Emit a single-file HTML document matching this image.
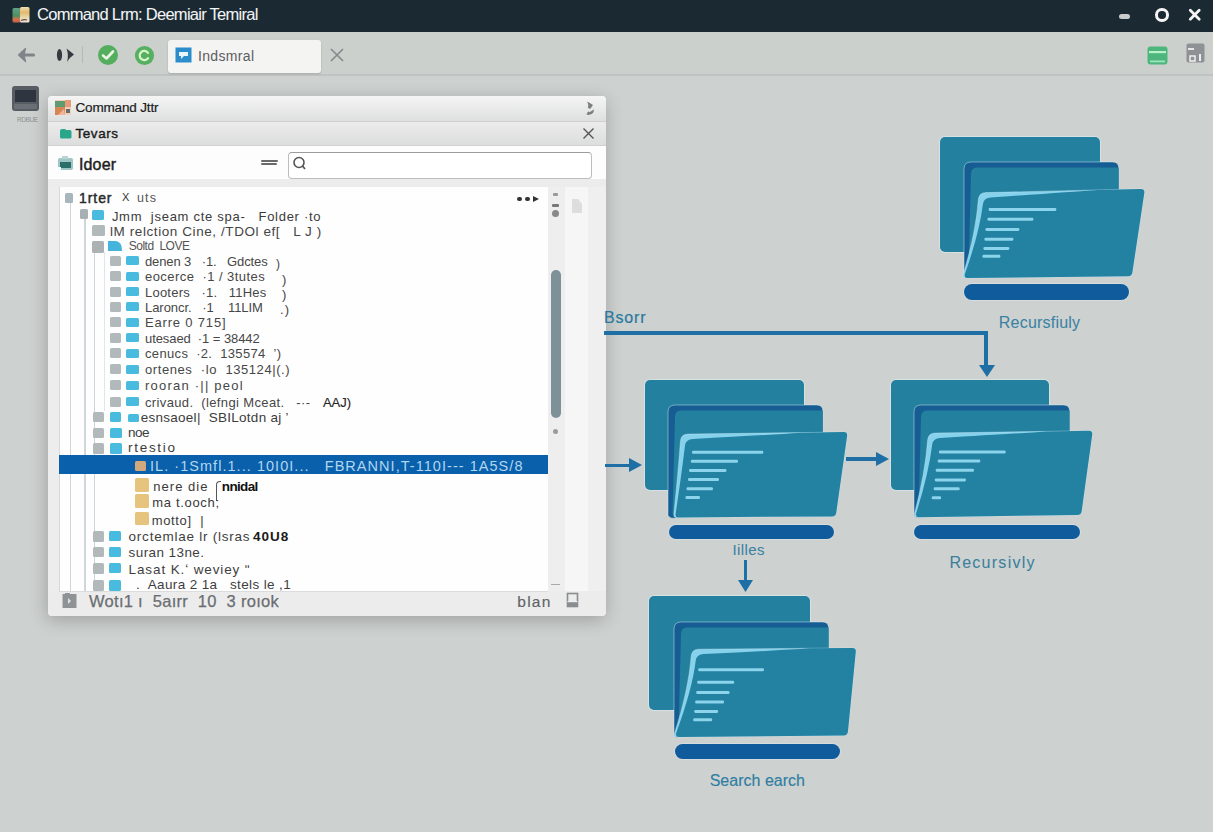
<!DOCTYPE html><html><head><meta charset="utf-8"><style>
html,body{margin:0;padding:0;}
body{width:1213px;height:832px;overflow:hidden;position:relative;background:#cdd1cf;font-family:"Liberation Sans",sans-serif;}
</style></head><body>
<div style="position:absolute;left:0px;top:0px;width:1213px;height:32px;background:#1b2933;"></div>
<svg style="position:absolute;left:12px;top:7px" width="18" height="16" viewBox="0 0 18 16"><defs>
<linearGradient id="ig1" x1="0" y1="0" x2="0" y2="1"><stop offset="0" stop-color="#5fa088"/><stop offset="0.55" stop-color="#4f8f5f"/><stop offset="0.75" stop-color="#c9784e"/><stop offset="1" stop-color="#d05a4a"/></linearGradient>
<linearGradient id="ig2" x1="0" y1="0" x2="0" y2="1"><stop offset="0" stop-color="#efe0b0"/><stop offset="0.35" stop-color="#e3b86c"/><stop offset="0.7" stop-color="#e6dcb0"/><stop offset="1" stop-color="#f0e4dc"/></linearGradient></defs>
<rect x="0.5" y="1" width="8" height="14.5" rx="1.5" fill="url(#ig1)"/><rect x="8" y="0" width="9.5" height="15.5" rx="1.5" fill="url(#ig2)"/><path d="M9 13.5Q12 12 15 13" stroke="#6a4a40" stroke-width="1.2" fill="none"/></svg>
<div style="position:absolute;left:37.0px;top:6.4px;font:normal 16.5px/16.5px 'Liberation Sans',sans-serif;color:#f2f4f5;letter-spacing:-0.73px;white-space:pre;-webkit-text-stroke:0.05px #f2f4f5;">Command Lrm: Deemiair Temiral</div>
<div style="position:absolute;left:1119px;top:13.5px;width:11px;height:5.5px;background:#c9cbcd;border-radius:3px;"></div>
<div style="position:absolute;left:1155px;top:8px;width:7.5px;height:7.5px;border:3px solid #f5f5f5;border-radius:50%;"></div>
<svg style="position:absolute;left:1187px;top:7px" width="15" height="15" viewBox="0 0 15 15"><path d="M3.3 3.3L12.2 12.2M12.2 3.3L3.3 12.2" stroke="#f5f5f5" stroke-width="2.8" stroke-linecap="round"/></svg>
<div style="position:absolute;left:0px;top:32px;width:1213px;height:43px;background:#cbd0cd;"></div>
<div style="position:absolute;left:0px;top:74px;width:1213px;height:1.5px;background:#bfc4c3;"></div>
<svg style="position:absolute;left:16px;top:46px" width="22" height="18" viewBox="0 0 22 18"><path d="M6 9H17.5" stroke="#7f8489" stroke-width="3.2" stroke-linecap="round"/><path d="M9.5 2.5L2.5 9L9.5 15.5L8 9Z" fill="#7f8489" stroke="#7f8489" stroke-width="1.2" stroke-linejoin="round"/></svg>
<svg style="position:absolute;left:55px;top:45px" width="22" height="20" viewBox="0 0 22 20"><ellipse cx="4.5" cy="10" rx="2.6" ry="6" fill="#353a41"/><path d="M11.5 3.5Q16 7 19 9.5Q15 12 12 17Q14 10 11.5 3.5Z" fill="#353a41"/></svg>
<div style="position:absolute;left:82px;top:46px;width:1px;height:17px;background:#b3b8b8;"></div>
<svg style="position:absolute;left:97px;top:44px" width="22" height="22" viewBox="0 0 22 22"><circle cx="11" cy="11" r="10" fill="#55ad5e"/><path d="M6 11.5L9.5 14.5L16 7.5" stroke="#e8f5e4" stroke-width="2.6" fill="none" stroke-linecap="round" stroke-linejoin="round"/></svg>
<svg style="position:absolute;left:134px;top:45px" width="22" height="22" viewBox="0 0 22 22"><circle cx="10.5" cy="10.5" r="9.6" fill="#56b060"/><path d="M14 7.8A4.6 4.6 0 1 0 14 13.2" stroke="#d4f5c8" stroke-width="2.3" fill="none" stroke-linecap="round"/></svg>
<div style="position:absolute;left:168px;top:40px;width:153px;height:33px;background:#f4f4f3;border-radius:3px;box-shadow:0 1px 2px rgba(0,0,0,0.18);"></div>
<svg style="position:absolute;left:175px;top:47px" width="17" height="16" viewBox="0 0 17 16"><rect x="0.5" y="0.5" width="16" height="15" fill="#2b8dcb"/><path d="M4 5H13V9H9L6 12V9H4Z" fill="#eaf4fb"/></svg>
<div style="position:absolute;left:198.0px;top:48.6px;font:normal 14px/14px 'Liberation Sans',sans-serif;color:#5b5d5f;letter-spacing:0.33px;white-space:pre;">Indsmral</div>
<svg style="position:absolute;left:328px;top:46px" width="18" height="18" viewBox="0 0 18 18"><path d="M3 3L15 15M15 3L3 15" stroke="#858a8e" stroke-width="1.7"/></svg>
<svg style="position:absolute;left:1147px;top:46px" width="21" height="19" viewBox="0 0 21 19"><rect x="0.5" y="0.5" width="20" height="18" rx="3" fill="#4cb67c"/><rect x="2" y="5" width="17" height="2.2" fill="#b8f0c8"/><rect x="3" y="14.5" width="15" height="1.8" fill="#9fe3c0"/></svg>
<svg style="position:absolute;left:1186px;top:43px" width="19" height="20" viewBox="0 0 19 20"><rect x="0.5" y="0.5" width="18" height="19" rx="2" fill="#8e9295"/><rect x="2" y="5" width="6" height="2" fill="#e4e6e7"/><rect x="4" y="13" width="5" height="5" fill="none" stroke="#eef0f0" stroke-width="1.5"/><rect x="13" y="11" width="2" height="7" fill="#eef0f0"/></svg>
<div style="position:absolute;left:12px;top:86px;width:27px;height:25px;background:#585d63;border-radius:3px;"></div>
<div style="position:absolute;left:15px;top:90px;width:21px;height:12px;background:#2e3440;"></div>
<div style="position:absolute;left:14px;top:104px;width:23px;height:5px;background:#6b7077;border-radius:1px;"></div>
<div style="position:absolute;left:17.0px;top:116.5px;font:normal 6.5px/6.5px 'Liberation Sans',sans-serif;color:#8e9294;letter-spacing:-0.44px;white-space:pre;">RDBUE</div>
<div style="position:absolute;left:48px;top:96px;width:558px;height:520px;border-radius:4px;box-shadow:-1px 4px 18px rgba(0,0,0,0.24);background:#ededed"></div>
<div style="position:absolute;left:48px;top:96px;width:558px;height:25px;background:linear-gradient(#f5f5f5,#dedfdf);border-radius:4px 4px 0 0;"></div>
<div style="position:absolute;left:48px;top:120.5px;width:558px;height:1.0px;background:#d0d0d0;"></div>
<div style="position:absolute;left:48px;top:121.5px;width:558px;height:23.5px;background:linear-gradient(#ececec,#dcdddd);"></div>
<div style="position:absolute;left:48px;top:144.5px;width:558px;height:1.0px;background:#cfcfcf;"></div>
<svg style="position:absolute;left:55px;top:100px" width="16" height="15" viewBox="0 0 16 15"><rect x="0" y="0" width="16" height="15" fill="#f0d0b8"/><rect x="0" y="1" width="10" height="6" fill="#5e9b70"/><rect x="0" y="7" width="10" height="8" fill="#d68555"/><rect x="10" y="0" width="6" height="7" fill="#e89a78"/><rect x="11" y="9" width="4" height="4" fill="#6a6a6a"/><path d="M3 15L9 9L10 15Z" fill="#f3b59a"/></svg>
<div style="position:absolute;left:75.5px;top:100.9px;font:normal 13.5px/13.5px 'Liberation Sans',sans-serif;color:#1c1c1c;letter-spacing:-0.16px;white-space:pre;-webkit-text-stroke:0.2px #1c1c1c;">Command Jttr</div>
<svg style="position:absolute;left:584px;top:100px" width="12" height="16" viewBox="0 0 12 16"><path d="M3 1.4Q6.5 3 9 5Q7.5 7.5 6 9Q4.5 8 3.8 7.4Q5 5 3 1.4Z" fill="#7d8081"/><path d="M9.8 9.3Q10.2 13.6 6.5 14.6Q4 15.2 2.5 14.6Q3.2 12.4 4.2 11.6Q5.6 12.2 6.6 11.6Q8.4 10.6 9.8 9.3Z" fill="#7d8081"/></svg>
<svg style="position:absolute;left:59px;top:128px" width="13" height="11" viewBox="0 0 13 11"><path d="M1 3Q1 1 3 1H6L7 2H11Q12.5 2 12.5 4V9Q12.5 10.5 11 10.5H2.5Q1 10.5 1 9Z" fill="#2aa68a"/></svg>
<div style="position:absolute;left:75.5px;top:127.2px;font:normal 13.5px/13.5px 'Liberation Sans',sans-serif;color:#1c1c1c;letter-spacing:0.55px;white-space:pre;-webkit-text-stroke:0.4px #1c1c1c;">Tevars</div>
<svg style="position:absolute;left:582px;top:127px" width="13" height="13" viewBox="0 0 13 13"><path d="M1.5 1.5L11.5 11.5M11.5 1.5L1.5 11.5" stroke="#555" stroke-width="1.4"/></svg>
<div style="position:absolute;left:48px;top:145.5px;width:558px;height:33.5px;background:#fdfdfd;"></div>
<svg style="position:absolute;left:57px;top:156px" width="17" height="15" viewBox="0 0 17 15"><rect x="1" y="2" width="15" height="12" rx="2" fill="#9fc5c4"/><rect x="3" y="6" width="11" height="6" fill="#2b6e6a"/><rect x="5" y="0" width="6" height="3" fill="#b8d4d2"/><rect x="1" y="11" width="3" height="3" fill="#f4ffff"/></svg>
<div style="position:absolute;left:79.0px;top:156.7px;font:normal 16px/16px 'Liberation Sans',sans-serif;color:#1e1e1e;letter-spacing:0.13px;white-space:pre;-webkit-text-stroke:0.45px #1e1e1e;">Idoer</div>
<div style="position:absolute;left:260.5px;top:159.8px;width:17.0px;height:2.0px;background:#6a6a6a;border-radius:1px;"></div>
<div style="position:absolute;left:261px;top:163.3px;width:16px;height:2.0px;background:#6a6a6a;border-radius:1px;"></div>
<div style="position:absolute;left:288px;top:152px;width:302px;height:25px;border:1.5px solid #bdbdbd;border-top-color:#9c9c9c;border-radius:4px;background:#fff"></div>
<svg style="position:absolute;left:291px;top:155px" width="18" height="18" viewBox="0 0 18 18"><circle cx="8" cy="7.5" r="5" stroke="#555" stroke-width="1.6" fill="none"/><path d="M11.5 11L14 14" stroke="#555" stroke-width="1.8"/></svg>
<div style="position:absolute;left:48px;top:179px;width:558px;height:8px;background:#ececec;"></div>
<div style="position:absolute;left:59px;top:187px;width:489px;height:404px;background:#fefefe;border-left:1px solid #d8d8d8;box-sizing:border-box;"></div>
<div style="position:absolute;left:548px;top:187px;width:17px;height:404px;background:#eeeeee;"></div>
<div style="position:absolute;left:565px;top:187px;width:23px;height:404px;background:#f6f6f6;"></div>
<div style="position:absolute;left:588px;top:187px;width:18px;height:404px;background:#efefef;"></div>
<div style="position:absolute;left:551px;top:270px;width:10px;height:148px;background:#7e9198;border-radius:5px;"></div>
<div style="position:absolute;left:553px;top:429px;width:5px;height:5px;border-radius:50%;background:#979c9f"></div>
<div style="position:absolute;left:553px;top:193px;width:5px;height:3px;background:#9a9a9a;border-radius:1px;"></div>
<div style="position:absolute;left:552px;top:204px;width:7px;height:3px;background:#777;border-radius:1px;"></div>
<div style="position:absolute;left:552px;top:210px;width:7px;height:7px;border-radius:50%;background:#888"></div>
<div style="position:absolute;left:551px;top:583.5px;width:9px;height:1.0px;background:#aaa;"></div>
<svg style="position:absolute;left:571px;top:198px" width="12" height="16" viewBox="0 0 12 16"><path d="M1 1H7L11 6V15H1Z" fill="#dddddd"/></svg>
<div style="position:absolute;left:517px;top:196.5px;width:4.5px;height:4.5px;border-radius:50%;background:#333"></div>
<div style="position:absolute;left:525px;top:196.5px;width:4.5px;height:4.5px;border-radius:50%;background:#333"></div>
<svg style="position:absolute;left:532px;top:195px" width="8" height="8" viewBox="0 0 8 8"><path d="M1 1L7 4L1 7Z" fill="#333"/></svg>
<div style="position:absolute;left:48px;top:591px;width:558px;height:25px;background:#ececec;border-radius:0 0 4px 4px;"></div>
<div style="position:absolute;left:59px;top:590.5px;width:489px;height:1.0px;background:#dcdcdc;"></div>
<svg style="position:absolute;left:62px;top:593px" width="15" height="15" viewBox="0 0 15 15"><rect x="0.5" y="1" width="14" height="14" fill="#8f9396"/><rect x="3" y="0" width="5" height="3" fill="#8f9396"/><path d="M6 5L9 8L6 11Z" fill="#dfe1e2"/></svg>
<div style="position:absolute;left:89.0px;top:593.4px;font:normal 16.5px/16.5px 'Liberation Sans',sans-serif;color:#6a6e71;letter-spacing:0.29px;white-space:pre;-webkit-text-stroke:0.25px #6a6e71;">Wotı1 ı  5aırr  10  3 roıok</div>
<div style="position:absolute;left:517.3px;top:594.4px;font:normal 15.5px/15.5px 'Liberation Sans',sans-serif;color:#606367;letter-spacing:1.23px;white-space:pre;-webkit-text-stroke:0.15px #606367;">blan</div>
<svg style="position:absolute;left:566px;top:592px" width="13" height="16" viewBox="0 0 13 16"><rect x="1.5" y="1.5" width="10" height="13" fill="none" stroke="#8a8d90" stroke-width="1.6"/><rect x="1.5" y="9" width="10" height="5.5" fill="#8a8d90"/><rect x="1.5" y="9" width="10" height="1.2" fill="#eee"/></svg>
<div style="position:absolute;left:69.5px;top:203px;width:1.5px;height:388px;background:#cfd6da;"></div>
<div style="position:absolute;left:84px;top:219px;width:1.5px;height:372px;background:#cfd6da;"></div>
<div style="position:absolute;left:93.5px;top:252px;width:1.5px;height:339px;background:#cfd6da;"></div>
<div style="position:absolute;left:103.6px;top:252px;width:1.2000000000000028px;height:159px;background:#e0e5e8;"></div>
<div style="position:absolute;left:65px;top:193px;width:7.5px;height:10px;background:#a7b5bf;border-radius:1.5px;"></div>
<div style="position:absolute;left:79.0px;top:191.1px;font:normal 14px/14px 'Liberation Sans',sans-serif;color:#2a2a2a;letter-spacing:0.93px;white-space:pre;-webkit-text-stroke:0.45px #2a2a2a;">1rter</div>
<div style="position:absolute;left:122.0px;top:191.7px;font:normal 11px/11px 'Liberation Sans',sans-serif;color:#333;letter-spacing:0.00px;white-space:pre;">X</div>
<div style="position:absolute;left:137.0px;top:192.4px;font:normal 12.5px/12.5px 'Liberation Sans',sans-serif;color:#555;letter-spacing:1.16px;white-space:pre;">uts</div>
<div style="position:absolute;left:80px;top:208.5px;width:7.5px;height:10.5px;background:#a7b1b5;border-radius:1.5px;"></div>
<div style="position:absolute;left:92.3px;top:210px;width:12.100000000000009px;height:10px;background:#49bbdf;border-radius:1.5px;"></div>
<div style="position:absolute;left:111.9px;top:209.8px;font:normal 13px/13px 'Liberation Sans',sans-serif;color:#3b3b3b;letter-spacing:0.72px;white-space:pre;">Jmm  jseam cte spa-   Folder ·to</div>
<div style="position:absolute;left:92px;top:225px;width:12.5px;height:10.5px;background:#b2b9ba;border-radius:1.5px;"></div>
<div style="position:absolute;left:110.0px;top:224.8px;font:normal 13.5px/13.5px 'Liberation Sans',sans-serif;color:#444;letter-spacing:0.58px;white-space:pre;">lM relction Cine, /TDOl ef[   L J )</div>
<div style="position:absolute;left:92.3px;top:241px;width:11.400000000000006px;height:11.5px;background:#acb1b3;border-radius:1.5px;"></div>
<svg style="position:absolute;left:108px;top:241px" width="14" height="10" viewBox="0 0 14 10"><path d="M0 0H8Q14 1 14 9V10H0Z" fill="#45b4dc"/></svg>
<div style="position:absolute;left:128.7px;top:240.3px;font:normal 12px/12px 'Liberation Sans',sans-serif;color:#555;letter-spacing:-0.47px;white-space:pre;transform:scaleY(1.1);">Soltd  LOVE</div>
<div style="position:absolute;left:109.5px;top:255.8px;width:11.5px;height:10.0px;background:#b2b9ba;border-radius:1.5px;"></div>
<div style="position:absolute;left:126px;top:256.3px;width:12.599999999999994px;height:9.0px;background:#49bbdf;border-radius:1.5px;"></div>
<div style="position:absolute;left:145.0px;top:254.8px;font:normal 13px/13px 'Liberation Sans',sans-serif;color:#474747;letter-spacing:-0.11px;white-space:pre;">denen 3   ·1.   Gdctes</div>
<div style="position:absolute;left:109.5px;top:271.0px;width:11.5px;height:10.0px;background:#b2b9ba;border-radius:1.5px;"></div>
<div style="position:absolute;left:126px;top:271.5px;width:12.599999999999994px;height:9.0px;background:#49bbdf;border-radius:1.5px;"></div>
<div style="position:absolute;left:145.0px;top:270.0px;font:normal 13px/13px 'Liberation Sans',sans-serif;color:#474747;letter-spacing:0.44px;white-space:pre;">eocerce  ·1 / 3tutes</div>
<div style="position:absolute;left:109.5px;top:286.5px;width:11.5px;height:10.0px;background:#b2b9ba;border-radius:1.5px;"></div>
<div style="position:absolute;left:126px;top:287.0px;width:12.599999999999994px;height:9.0px;background:#49bbdf;border-radius:1.5px;"></div>
<div style="position:absolute;left:145.0px;top:285.5px;font:normal 13px/13px 'Liberation Sans',sans-serif;color:#474747;letter-spacing:0.22px;white-space:pre;">Looters   ·1.   11Hes</div>
<div style="position:absolute;left:109.5px;top:301.7px;width:11.5px;height:10.0px;background:#b2b9ba;border-radius:1.5px;"></div>
<div style="position:absolute;left:126px;top:302.2px;width:12.599999999999994px;height:9.0px;background:#49bbdf;border-radius:1.5px;"></div>
<div style="position:absolute;left:145.0px;top:300.7px;font:normal 13px/13px 'Liberation Sans',sans-serif;color:#474747;letter-spacing:-0.05px;white-space:pre;">Laroncr.   ·1    11LIM</div>
<div style="position:absolute;left:109.5px;top:317.2px;width:11.5px;height:10.0px;background:#b2b9ba;border-radius:1.5px;"></div>
<div style="position:absolute;left:126px;top:317.7px;width:12.599999999999994px;height:9.0px;background:#49bbdf;border-radius:1.5px;"></div>
<div style="position:absolute;left:145.0px;top:316.2px;font:normal 13px/13px 'Liberation Sans',sans-serif;color:#474747;letter-spacing:0.82px;white-space:pre;">Earre 0 715]</div>
<div style="position:absolute;left:109.5px;top:332.6px;width:11.5px;height:10.0px;background:#b2b9ba;border-radius:1.5px;"></div>
<div style="position:absolute;left:126px;top:333.1px;width:12.599999999999994px;height:9.0px;background:#49bbdf;border-radius:1.5px;"></div>
<div style="position:absolute;left:145.0px;top:331.6px;font:normal 13px/13px 'Liberation Sans',sans-serif;color:#474747;letter-spacing:-0.07px;white-space:pre;">utesaed  ·1 = 38442</div>
<div style="position:absolute;left:109.5px;top:348.2px;width:11.5px;height:10.0px;background:#b2b9ba;border-radius:1.5px;"></div>
<div style="position:absolute;left:126px;top:348.7px;width:12.599999999999994px;height:9.0px;background:#49bbdf;border-radius:1.5px;"></div>
<div style="position:absolute;left:145.0px;top:347.2px;font:normal 13px/13px 'Liberation Sans',sans-serif;color:#474747;letter-spacing:0.34px;white-space:pre;">cenucs  ·2.  135574  ʼ)</div>
<div style="position:absolute;left:109.5px;top:364.3px;width:11.5px;height:10.0px;background:#b2b9ba;border-radius:1.5px;"></div>
<div style="position:absolute;left:126px;top:364.8px;width:12.599999999999994px;height:9.0px;background:#49bbdf;border-radius:1.5px;"></div>
<div style="position:absolute;left:145.0px;top:363.3px;font:normal 13px/13px 'Liberation Sans',sans-serif;color:#474747;letter-spacing:0.58px;white-space:pre;">ortenes  ·lo  135124|(.)</div>
<div style="position:absolute;left:109.5px;top:380.4px;width:11.5px;height:10.0px;background:#b2b9ba;border-radius:1.5px;"></div>
<div style="position:absolute;left:126px;top:380.9px;width:12.599999999999994px;height:9.0px;background:#49bbdf;border-radius:1.5px;"></div>
<div style="position:absolute;left:145.0px;top:379.4px;font:normal 13px/13px 'Liberation Sans',sans-serif;color:#474747;letter-spacing:1.22px;white-space:pre;">rooran ·|| peol</div>
<div style="position:absolute;left:109.5px;top:396.5px;width:11.5px;height:10.0px;background:#b2b9ba;border-radius:1.5px;"></div>
<div style="position:absolute;left:126px;top:397.0px;width:12.599999999999994px;height:9.0px;background:#49bbdf;border-radius:1.5px;"></div>
<div style="position:absolute;left:145.0px;top:395.5px;font:normal 13px/13px 'Liberation Sans',sans-serif;color:#474747;letter-spacing:0.36px;white-space:pre;">crivaud.  (lefngi Mceat.   -·-</div>
<div style="position:absolute;left:323.0px;top:395.5px;font:normal 13px/13px 'Liberation Sans',sans-serif;color:#262626;letter-spacing:-0.06px;white-space:pre;-webkit-text-stroke:0.15px #262626;">AAJ)</div>
<div style="position:absolute;left:276.0px;top:257.8px;font:normal 12px/12px 'Liberation Sans',sans-serif;color:#444;letter-spacing:0.00px;white-space:pre;">)</div>
<div style="position:absolute;left:282.0px;top:273.0px;font:normal 13px/13px 'Liberation Sans',sans-serif;color:#444;letter-spacing:0.00px;white-space:pre;">)</div>
<div style="position:absolute;left:282.0px;top:288.0px;font:normal 13px/13px 'Liberation Sans',sans-serif;color:#444;letter-spacing:0.00px;white-space:pre;">)</div>
<div style="position:absolute;left:280.0px;top:303.0px;font:normal 13px/13px 'Liberation Sans',sans-serif;color:#444;letter-spacing:1.06px;white-space:pre;">.)</div>
<div style="position:absolute;left:93px;top:411.5px;width:11.299999999999997px;height:10.5px;background:#b2b9ba;border-radius:1.5px;"></div>
<div style="position:absolute;left:109.7px;top:411.5px;width:11.299999999999997px;height:10.5px;background:#49bbdf;border-radius:1.5px;"></div>
<div style="position:absolute;left:128px;top:413.8px;width:11px;height:8.199999999999989px;background:#49bbdf;border-radius:1.5px;"></div>
<div style="position:absolute;left:140.7px;top:411.1px;font:normal 13.5px/13.5px 'Liberation Sans',sans-serif;color:#3c3c3c;letter-spacing:0.27px;white-space:pre;">esnsaoel|  SBILotdn aj ʼ</div>
<div style="position:absolute;left:93px;top:428px;width:11.299999999999997px;height:10px;background:#b2b9ba;border-radius:1.5px;"></div>
<div style="position:absolute;left:109.7px;top:428px;width:11.899999999999991px;height:10px;background:#49bbdf;border-radius:1.5px;"></div>
<div style="position:absolute;left:128.0px;top:426.1px;font:normal 13.5px/13.5px 'Liberation Sans',sans-serif;color:#3c3c3c;letter-spacing:-0.56px;white-space:pre;">noe</div>
<div style="position:absolute;left:93px;top:443.4px;width:11.299999999999997px;height:10.200000000000045px;background:#b2b9ba;border-radius:1.5px;"></div>
<div style="position:absolute;left:109.7px;top:443.4px;width:11.899999999999991px;height:10.200000000000045px;background:#49bbdf;border-radius:1.5px;"></div>
<div style="position:absolute;left:128.0px;top:441.1px;font:normal 13.5px/13.5px 'Liberation Sans',sans-serif;color:#3c3c3c;letter-spacing:1.71px;white-space:pre;">rtestio</div>
<div style="position:absolute;left:59px;top:455.3px;width:489px;height:19.099999999999966px;background:#0a60ab;"></div>
<div style="position:absolute;left:135px;top:460.7px;width:11px;height:10.300000000000011px;background:#d2a97c;border-radius:1.5px;"></div>
<div style="position:absolute;left:150.0px;top:458.7px;font:normal 14.5px/14.5px 'Liberation Sans',sans-serif;color:#b0d6f0;letter-spacing:1.04px;white-space:pre;">IL. ·1Smfl.1... 10I0I...   FBRANNI,T-110I--- 1A5S/8</div>
<div style="position:absolute;left:135px;top:478px;width:13.699999999999989px;height:13.5px;background:#e6c47e;border-radius:1.5px;"></div>
<div style="position:absolute;left:153.2px;top:480.2px;font:normal 13px/13px 'Liberation Sans',sans-serif;color:#3a3a3a;letter-spacing:1.05px;white-space:pre;">nere die</div>
<div style="position:absolute;left:216px;top:481px;width:4px;height:19px;border-left:1px solid #555;border-top:1px solid #555;border-radius:4px 0 0 0"></div>
<div style="position:absolute;left:221.8px;top:479.8px;font:bold 13.5px/13.5px 'Liberation Sans',sans-serif;color:#111;letter-spacing:-0.65px;white-space:pre;">nnidal</div>
<div style="position:absolute;left:135px;top:494.3px;width:13.699999999999989px;height:13.5px;background:#e6c47e;border-radius:1.5px;"></div>
<div style="position:absolute;left:152.2px;top:495.8px;font:normal 13px/13px 'Liberation Sans',sans-serif;color:#3a3a3a;letter-spacing:0.68px;white-space:pre;">ma t.ooch;</div>
<div style="position:absolute;left:135px;top:511.8px;width:13.699999999999989px;height:13.199999999999989px;background:#e6c47e;border-radius:1.5px;"></div>
<div style="position:absolute;left:151.7px;top:514.0px;font:normal 13px/13px 'Liberation Sans',sans-serif;color:#3a3a3a;letter-spacing:0.65px;white-space:pre;">motto]  |</div>
<div style="position:absolute;left:92.8px;top:531px;width:11.200000000000003px;height:11px;background:#b2b9ba;border-radius:1.5px;"></div>
<div style="position:absolute;left:108.5px;top:531px;width:12.799999999999997px;height:10px;background:#49bbdf;border-radius:1.5px;"></div>
<div style="position:absolute;left:128.6px;top:529.7px;font:normal 13.5px/13.5px 'Liberation Sans',sans-serif;color:#3e3e3e;letter-spacing:0.76px;white-space:pre;">orctemlae lr (lsras</div>
<div style="position:absolute;left:252.9px;top:529.7px;font:bold 13.5px/13.5px 'Liberation Sans',sans-serif;color:#1a1a1a;letter-spacing:1.04px;white-space:pre;">40U8</div>
<div style="position:absolute;left:92.8px;top:546.6px;width:11.200000000000003px;height:10.799999999999955px;background:#b2b9ba;border-radius:1.5px;"></div>
<div style="position:absolute;left:108.5px;top:546.6px;width:12.799999999999997px;height:10.399999999999977px;background:#49bbdf;border-radius:1.5px;"></div>
<div style="position:absolute;left:128.6px;top:545.8px;font:normal 13.5px/13.5px 'Liberation Sans',sans-serif;color:#3e3e3e;letter-spacing:0.41px;white-space:pre;">suran 13ne.</div>
<div style="position:absolute;left:92.8px;top:562.8px;width:11.200000000000003px;height:11.700000000000045px;background:#b2b9ba;border-radius:1.5px;"></div>
<div style="position:absolute;left:108.5px;top:562.8px;width:12.799999999999997px;height:10.200000000000045px;background:#49bbdf;border-radius:1.5px;"></div>
<div style="position:absolute;left:128.6px;top:562.9px;font:normal 13.5px/13.5px 'Liberation Sans',sans-serif;color:#3e3e3e;letter-spacing:0.88px;white-space:pre;">Lasat K.ʻ weviey ʺ</div>
<div style="position:absolute;left:92.8px;top:580px;width:11.200000000000003px;height:10.5px;background:#b2b9ba;border-radius:1.5px;"></div>
<div style="position:absolute;left:108.5px;top:580px;width:12.799999999999997px;height:10.5px;background:#49bbdf;border-radius:1.5px;"></div>
<div style="position:absolute;left:59px;top:578px;width:489px;height:12.5px;overflow:hidden">
<div style="position:absolute;left:77.0px;top:0.4px;font:normal 13.5px/13.5px 'Liberation Sans',sans-serif;color:#3e3e3e;letter-spacing:0.38px;white-space:pre;">.  Aaura 2 1a   stels le ,1</div>
</div>
<div style="position:absolute;left:939.8px;top:137.2px;width:159.9000000000001px;height:115.0px;background:#24809f;border-radius:5px;box-shadow:0 0 0 1px rgba(225,242,248,0.5)"></div>
<svg style="position:absolute;left:960.6px;top:158.8px" width="187" height="123" viewBox="0 0 187 123"><path d="M3.00 10.00 Q3.00 3.00 10.00 3.00 L151.70 3.00 Q157.70 3.00 157.70 9.00 L157.70 37.90 L4.70 119.00 Q6.00 121.50 3.00 117.00 Z" fill="#165d93" stroke="rgba(225,242,248,0.45)" stroke-width="1"/><path d="M10.00 15.00 Q10.00 8.50 16.00 8.50 L157.70 8.50 L157.70 37.90 L3.70 118.00 L7.50 115.00 Z" fill="#23809f"/><path d="M24.90 33.60 L179.80 29.90 Q183.80 29.90 183.30 33.90 L171.40 113.20 Q170.90 117.20 166.90 117.20 L4.70 119.00 Q1.70 119.00 2.00 116.00 Q14.90 73.90 17.40 39.90 Q18.40 33.60 24.90 33.60 Z" fill="#86d2ec" stroke="rgba(225,242,248,0.45)" stroke-width="0.8"/><path d="M29.90 38.40 Q106.91 33.22 136.91 31.02 L179.80 29.90 Q183.80 29.90 183.30 33.90 L171.40 113.20 Q170.90 117.20 166.90 117.20 L5.70 119.00 Q3.20 119.00 3.90 115.00 Q18.40 73.90 21.90 44.90 Q22.90 38.40 29.90 38.40 Z" fill="#2381a2"/><rect x="27.6" y="49.0" width="67.8" height="3" rx="1.3" fill="#8bd4ec"/><rect x="26.4" y="58.8" width="46.0" height="3" rx="1.3" fill="#8bd4ec"/><rect x="24.4" y="68.9" width="34.0" height="3" rx="1.3" fill="#8bd4ec"/><rect x="23.4" y="78.7" width="29.0" height="3" rx="1.3" fill="#8bd4ec"/><rect x="22.4" y="87.9" width="26.0" height="3" rx="1.3" fill="#8bd4ec"/><rect x="21.4" y="95.8" width="18.0" height="3" rx="1.3" fill="#8bd4ec"/></svg>
<div style="position:absolute;left:963.6px;top:283.9px;width:165.19999999999993px;height:16.400000000000034px;background:#0f5b9c;border-radius:8px;box-shadow:0 0 0 1px rgba(225,242,248,0.35)"></div>
<div style="position:absolute;left:645.4px;top:379.7px;width:159.0px;height:110.30000000000001px;background:#24809f;border-radius:5px;box-shadow:0 0 0 1px rgba(225,242,248,0.5)"></div>
<svg style="position:absolute;left:665px;top:401.6px" width="186" height="119" viewBox="0 0 186 119"><path d="M3.00 10.00 Q3.00 3.00 10.00 3.00 L151.80 3.00 Q157.80 3.00 157.80 9.00 L157.80 38.00 L11.50 115.40 Q6.00 117.90 3.00 113.40 Z" fill="#165d93" stroke="rgba(225,242,248,0.45)" stroke-width="1"/><path d="M10.00 15.00 Q10.00 8.50 16.00 8.50 L157.80 8.50 L157.80 38.00 L10.50 114.40 L7.50 111.40 Z" fill="#23809f"/><path d="M23.00 32.10 L178.60 30.00 Q182.60 30.00 182.10 34.00 L171.30 110.40 Q170.80 114.40 166.80 114.40 L11.50 115.40 Q8.50 115.40 8.80 112.40 Q13.00 72.40 15.50 38.40 Q16.50 32.10 23.00 32.10 Z" fill="#86d2ec" stroke="rgba(225,242,248,0.45)" stroke-width="0.8"/><path d="M28.00 36.90 Q105.51 32.87 135.51 30.67 L178.60 30.00 Q182.60 30.00 182.10 34.00 L171.30 110.40 Q170.80 114.40 166.80 114.40 L12.50 115.40 Q10.00 115.40 10.70 111.40 Q16.50 72.40 20.00 43.40 Q21.00 36.90 28.00 36.90 Z" fill="#2381a2"/><rect x="27.0" y="48.7" width="71.3" height="3" rx="1.3" fill="#8bd4ec"/><rect x="25.8" y="57.7" width="47.2" height="3" rx="1.3" fill="#8bd4ec"/><rect x="24.0" y="66.9" width="37.5" height="3" rx="1.3" fill="#8bd4ec"/><rect x="23.0" y="76.1" width="31.0" height="3" rx="1.3" fill="#8bd4ec"/><rect x="21.5" y="85.2" width="26.5" height="3" rx="1.3" fill="#8bd4ec"/><rect x="20.4" y="94.1" width="14.6" height="3" rx="1.3" fill="#8bd4ec"/></svg>
<div style="position:absolute;left:669.2px;top:524.7px;width:164.39999999999998px;height:14.0px;background:#0f5b9c;border-radius:8px;box-shadow:0 0 0 1px rgba(225,242,248,0.35)"></div>
<div style="position:absolute;left:890.8px;top:379.9px;width:158.10000000000014px;height:110.0px;background:#24809f;border-radius:5px;box-shadow:0 0 0 1px rgba(225,242,248,0.5)"></div>
<svg style="position:absolute;left:911.3px;top:401.8px" width="185" height="119" viewBox="0 0 185 119"><path d="M3.00 10.00 Q3.00 3.00 10.00 3.00 L152.60 3.00 Q158.60 3.00 158.60 9.00 L158.60 36.70 L6.00 115.20 Q6.00 117.70 3.00 113.20 Z" fill="#165d93" stroke="rgba(225,242,248,0.45)" stroke-width="1"/><path d="M10.00 15.00 Q10.00 8.50 16.00 8.50 L158.60 8.50 L158.60 36.70 L5.00 114.20 L7.50 111.20 Z" fill="#23809f"/><path d="M24.20 31.10 L177.70 28.70 Q181.70 28.70 181.20 32.70 L170.70 109.00 Q170.20 113.00 166.20 113.00 L6.00 115.20 Q3.00 115.20 3.30 112.20 Q14.20 71.40 16.70 37.40 Q17.70 31.10 24.20 31.10 Z" fill="#86d2ec" stroke="rgba(225,242,248,0.45)" stroke-width="0.8"/><path d="M29.20 35.90 Q105.20 31.66 135.20 29.46 L177.70 28.70 Q181.70 28.70 181.20 32.70 L170.70 109.00 Q170.20 113.00 166.20 113.00 L7.00 115.20 Q4.50 115.20 5.20 111.20 Q17.70 71.40 21.20 42.40 Q22.20 35.90 29.20 35.90 Z" fill="#2381a2"/><rect x="27.9" y="48.5" width="66.8" height="3" rx="1.3" fill="#8bd4ec"/><rect x="26.7" y="57.6" width="42.6" height="3" rx="1.3" fill="#8bd4ec"/><rect x="24.7" y="66.7" width="38.3" height="3" rx="1.3" fill="#8bd4ec"/><rect x="23.7" y="76.4" width="31.3" height="3" rx="1.3" fill="#8bd4ec"/><rect x="22.7" y="85.2" width="26.0" height="3" rx="1.3" fill="#8bd4ec"/><rect x="20.7" y="94.3" width="9.4" height="3" rx="1.3" fill="#8bd4ec"/></svg>
<div style="position:absolute;left:914.3px;top:524.5px;width:165.70000000000005px;height:14.5px;background:#0f5b9c;border-radius:8px;box-shadow:0 0 0 1px rgba(225,242,248,0.35)"></div>
<div style="position:absolute;left:648.75px;top:596.3px;width:160.95000000000005px;height:114.0px;background:#24809f;border-radius:5px;box-shadow:0 0 0 1px rgba(225,242,248,0.5)"></div>
<svg style="position:absolute;left:670.75px;top:618.9px" width="188" height="122" viewBox="0 0 188 122"><path d="M3.00 10.00 Q3.00 3.00 10.00 3.00 L151.65 3.00 Q157.65 3.00 157.65 9.00 L157.65 36.90 L6.00 118.00 Q6.00 120.50 3.00 116.00 Z" fill="#165d93" stroke="rgba(225,242,248,0.45)" stroke-width="1"/><path d="M10.00 15.00 Q10.00 8.50 16.00 8.50 L157.65 8.50 L157.65 36.90 L5.00 117.00 L7.50 114.00 Z" fill="#23809f"/><path d="M27.75 30.20 L181.25 28.90 Q185.25 28.90 184.75 32.90 L176.95 112.40 Q176.45 116.40 172.45 116.40 L6.00 118.00 Q3.00 118.00 3.30 115.00 Q17.75 70.50 20.25 36.50 Q21.25 30.20 27.75 30.20 Z" fill="#86d2ec" stroke="rgba(225,242,248,0.45)" stroke-width="0.8"/><path d="M32.75 35.00 Q108.75 31.55 138.75 29.35 L181.25 28.90 Q185.25 28.90 184.75 32.90 L176.95 112.40 Q176.45 116.40 172.45 116.40 L7.00 118.00 Q4.50 118.00 5.20 114.00 Q21.25 70.50 24.75 41.50 Q25.75 35.00 32.75 35.00 Z" fill="#2381a2"/><rect x="27.2" y="49.3" width="65.8" height="3" rx="1.3" fill="#8bd4ec"/><rect x="26.2" y="61.8" width="37.0" height="3" rx="1.3" fill="#8bd4ec"/><rect x="25.2" y="72.1" width="33.4" height="3" rx="1.3" fill="#8bd4ec"/><rect x="24.2" y="81.5" width="28.8" height="3" rx="1.3" fill="#8bd4ec"/><rect x="23.2" y="90.9" width="24.0" height="3" rx="1.3" fill="#8bd4ec"/><rect x="22.2" y="99.3" width="19.0" height="3" rx="1.3" fill="#8bd4ec"/></svg>
<div style="position:absolute;left:675.3px;top:744px;width:164.70000000000005px;height:14.75px;background:#0f5b9c;border-radius:8px;box-shadow:0 0 0 1px rgba(225,242,248,0.35)"></div>
<div style="position:absolute;left:604px;top:331.3px;width:384px;height:3.5px;background:#1e6fa6;"></div>
<div style="position:absolute;left:984.3px;top:331.3px;width:3.5px;height:40.69999999999999px;background:#1e6fa6;"></div>
<svg style="position:absolute;left:978px;top:364px" width="18" height="14" viewBox="0 0 18 14"><path d="M1 1H17L9 13Z" fill="#1e6fa6"/></svg>
<div style="position:absolute;left:605px;top:463.5px;width:27px;height:3.5px;background:#1e6fa6;"></div>
<svg style="position:absolute;left:628px;top:457px" width="15" height="16" viewBox="0 0 15 16"><path d="M1 1L14 8L1 15Z" fill="#1e6fa6"/></svg>
<div style="position:absolute;left:846px;top:457px;width:32px;height:3.5px;background:#1e6fa6;"></div>
<svg style="position:absolute;left:875px;top:451px" width="15" height="16" viewBox="0 0 15 16"><path d="M1 1L14 8L1 15Z" fill="#1e6fa6"/></svg>
<div style="position:absolute;left:743.5px;top:560px;width:3.5px;height:22px;background:#1e6fa6;"></div>
<svg style="position:absolute;left:737px;top:579px" width="17" height="14" viewBox="0 0 17 14"><path d="M1 1H16L8.5 13Z" fill="#1e6fa6"/></svg>
<div style="position:absolute;left:604.0px;top:310.1px;font:normal 16px/16px 'Liberation Sans',sans-serif;color:#2a7aa0;letter-spacing:0.82px;white-space:pre;-webkit-text-stroke:0.2px #2a7aa0;">Bsorr</div>
<div style="position:absolute;left:998.8px;top:315.3px;font:normal 16px/16px 'Liberation Sans',sans-serif;color:#3a82a4;letter-spacing:0.21px;white-space:pre;-webkit-text-stroke:0.05px #3a82a4;">Recursfiuly</div>
<div style="position:absolute;left:732.5px;top:542.0px;font:normal 15px/15px 'Liberation Sans',sans-serif;color:#3a82a4;letter-spacing:0.38px;white-space:pre;-webkit-text-stroke:0.05px #3a82a4;">Iilles</div>
<div style="position:absolute;left:949.4px;top:555.2px;font:normal 16px/16px 'Liberation Sans',sans-serif;color:#3a7f9e;letter-spacing:1.26px;white-space:pre;-webkit-text-stroke:0.05px #3a7f9e;">Recursivly</div>
<div style="position:absolute;left:709.7px;top:773.4px;font:normal 16px/16px 'Liberation Sans',sans-serif;color:#2f7ea3;letter-spacing:0.01px;white-space:pre;-webkit-text-stroke:0.15px #2f7ea3;">Search earch</div>
</body></html>
